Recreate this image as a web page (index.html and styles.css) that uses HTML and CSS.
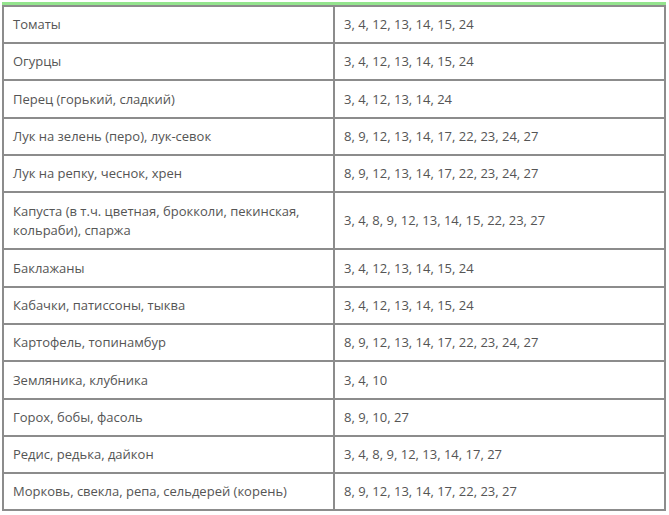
FILE: index.html
```html
<!DOCTYPE html>
<html lang="ru">
<head>
<meta charset="utf-8">
<link rel="stylesheet" href="styles.css">
</head>
<body>
<div class="wrap">
<table class="tbl">
<tr><td class="c1">Томаты</td><td class="c2">3, 4, 12, 13, 14, 15, 24</td></tr>
<tr><td class="c1">Огурцы</td><td class="c2">3, 4, 12, 13, 14, 15, 24</td></tr>
<tr class="tall"><td class="c1">Перец (горький, сладкий)</td><td class="c2">3, 4, 12, 13, 14, 24</td></tr>
<tr><td class="c1">Лук на зелень (перо), лук-севок</td><td class="c2">8, 9, 12, 13, 14, 17, 22, 23, 24, 27</td></tr>
<tr><td class="c1">Лук на репку, чеснок, хрен</td><td class="c2">8, 9, 12, 13, 14, 17, 22, 23, 24, 27</td></tr>
<tr class="tall"><td class="c1">Капуста (в т.ч. цветная, брокколи, пекинская, кольраби), спаржа</td><td class="c2">3, 4, 8, 9, 12, 13, 14, 15, 22, 23, 27</td></tr>
<tr class="tall"><td class="c1">Баклажаны</td><td class="c2">3, 4, 12, 13, 14, 15, 24</td></tr>
<tr><td class="c1">Кабачки, патиссоны, тыква</td><td class="c2">3, 4, 12, 13, 14, 15, 24</td></tr>
<tr><td class="c1">Картофель, топинамбур</td><td class="c2">8, 9, 12, 13, 14, 17, 22, 23, 24, 27</td></tr>
<tr class="tall"><td class="c1">Земляника, клубника</td><td class="c2">3, 4, 10</td></tr>
<tr><td class="c1">Горох, бобы, фасоль</td><td class="c2">8, 9, 10, 27</td></tr>
<tr><td class="c1">Редис, редька, дайкон</td><td class="c2">3, 4, 8, 9, 12, 13, 14, 17, 27</td></tr>
<tr><td class="c1">Морковь, свекла, репа, сельдерей (корень)</td><td class="c2">8, 9, 12, 13, 14, 17, 22, 23, 27</td></tr>
</table>
</div>
</body>
</html>
```
FILE: styles.css
```css
html, body {
  margin: 0;
  padding: 0;
  background: #ffffff;
}
.wrap {
  margin: 2px 0 0 2px;
  width: 664px;
  border-top: 3px solid #94e48e;
}
.tbl {
  border-collapse: collapse;
  width: 664px;
  font-family: "Open Sans", "DejaVu Sans", sans-serif;
  font-size: 13px;
  line-height: 19px;
  color: #555555;
}
.tbl td {
  border: 2px solid #8c8c8c;
  padding: 8px 9px 8px 9px;
  vertical-align: middle;
  text-align: left;
}
.tbl .tall td {
  padding-top: 8.5px;
  padding-bottom: 8.5px;
}
.c1 {
  width: 311px;
}
```
